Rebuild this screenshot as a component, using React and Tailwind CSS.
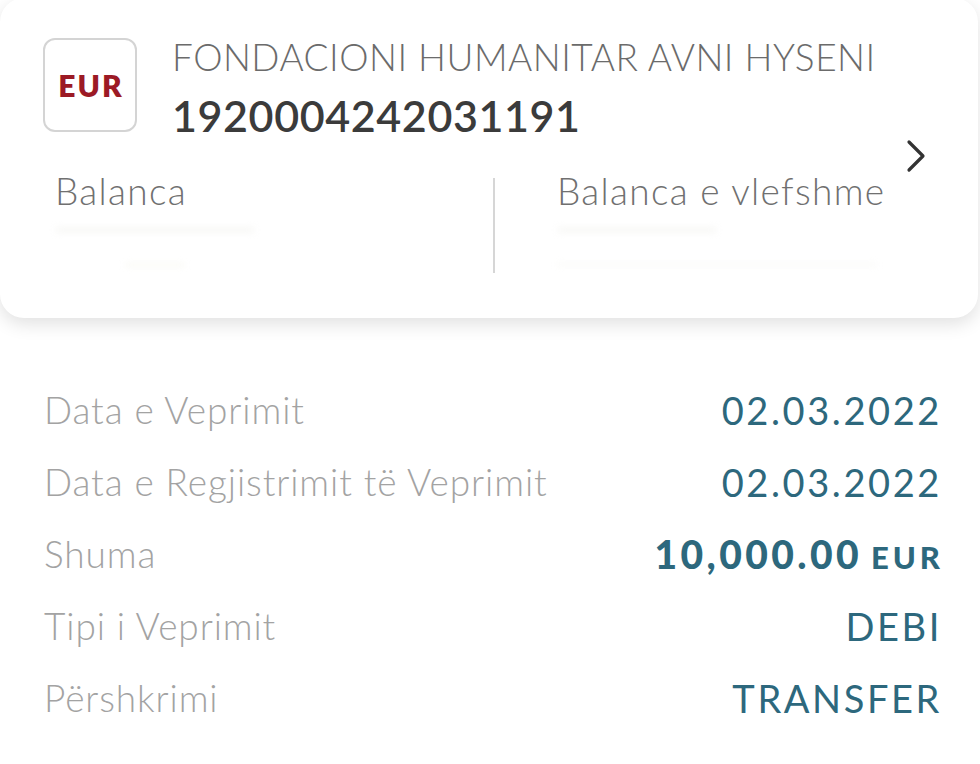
import React from 'react'

const rows = [
  { label: 'Data e Veprimit', value: '02.03.2022' },
  { label: 'Data e Regjistrimit të Veprimit', value: '02.03.2022' },
  { label: 'Shuma', value: 'amount' },
  { label: 'Tipi i Veprimit', value: 'DEBI' },
  { label: 'Përshkrimi', value: 'TRANSFER' },
]

const Chevron = () => (
  <svg width="24" height="36" viewBox="0 0 24 36" fill="none">
    <path d="M5 4 L19 18 L5 32" stroke="#333" strokeWidth="3.2" strokeLinecap="round" strokeLinejoin="round" />
  </svg>
)

const App = () => {
  return (
    <div className="w-[980px] h-[764px] bg-white overflow-hidden font-['Lato','Noto_Sans',sans-serif]">
      <div className="relative w-[978px] h-[320px] -mt-[2px] bg-white rounded-[24px] shadow-[0_6px_18px_rgba(0,0,0,0.12)] pt-[40px]">
        <div className="flex items-start pl-[43px]">
          <div className="w-[94px] h-[94px] rounded-[12px] border-2 border-[#d4d4d4] flex items-center justify-center">
            <span className="text-[30px] font-extrabold text-[#9c1a25] tracking-[2px] ml-[2px]">EUR</span>
          </div>
          <div className="ml-[35px] flex flex-col -mt-[3px]">
            <div className="text-[37px] leading-[44px] font-light text-[#6b6b6b] tracking-[0.5px]">FONDACIONI HUMANITAR AVNI HYSENI</div>
            <div className="mt-[12px] text-[43px] leading-[50px] font-semibold text-[#3b3b3b] tracking-[0.6px]">1920004242031191</div>
          </div>
        </div>
        <div className="absolute right-[50px] top-[140px]">
          <Chevron />
        </div>
        <div className="flex mt-[28px]">
          <div className="w-[493px] pl-[55px]">
            <div className="text-[37px] leading-[44px] font-light text-[#707070] tracking-[1.3px]">Balanca</div>
            <div className="mt-[14px] h-[6px] w-[200px] rounded-full bg-[#f8f8f6] blur-[3px]"></div>
            <div className="mt-[30px] h-[4px] w-[60px] ml-[70px] rounded-full bg-[#f9f9f4] blur-[3px]"></div>
          </div>
          <div className="w-[2px] h-[95px] bg-[#d6d6d6] mt-[9px]"></div>
          <div className="pl-[62px]">
            <div className="text-[37px] leading-[44px] font-light text-[#707070] tracking-[1.3px]">Balanca e vlefshme</div>
            <div className="mt-[14px] h-[6px] w-[160px] rounded-full bg-[#f8f8f6] blur-[3px]"></div>
            <div className="mt-[30px] h-[3px] w-[320px] rounded-full bg-[#f9f9f6] blur-[3px]"></div>
          </div>
        </div>
      </div>

      <div className="flex flex-col pl-[44px] pr-[40px] pt-[56px]">
        {rows.map((r) => (
          <div key={r.label} className="flex justify-between items-center h-[72px]">
            <span className="text-[37px] font-light text-[#a3a3a3] tracking-[0.9px]">{r.label}</span>
            {r.value === 'amount' ? (
              <span className="text-[#2d687d] flex items-baseline">
                <span className="text-[39px] font-black tracking-[3.4px]">10,000.00</span>
                <span className="text-[31px] font-black tracking-[4px] ml-[9px] -mr-[4px]">EUR</span>
              </span>
            ) : (
              <span className="text-[38px] font-normal text-[#2d687d] tracking-[2.6px] -mr-[2px]">{r.value}</span>
            )}
          </div>
        ))}
      </div>
    </div>
  )
}

export default App
